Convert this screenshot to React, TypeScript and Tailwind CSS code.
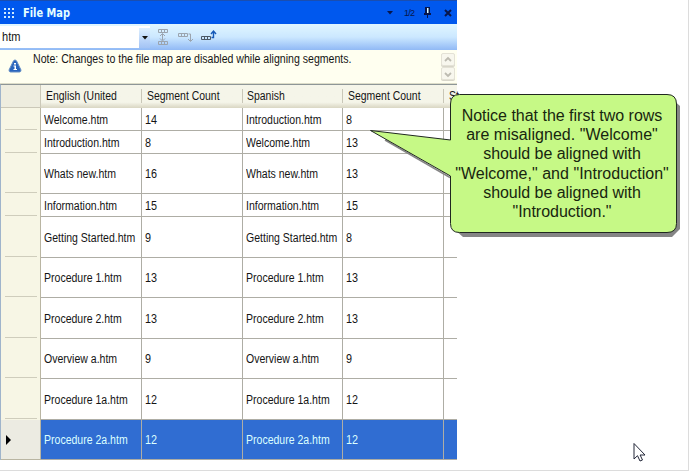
import React from "react";

type Row = { h: string; a: string; ac: string; b: string; bc: string; selected?: boolean };

const rows: Row[] = [
  { h: "h-[23px]", a: "Welcome.htm", ac: "14", b: "Introduction.htm", bc: "8" },
  { h: "h-[23px]", a: "Introduction.htm", ac: "8", b: "Welcome.htm", bc: "13" },
  { h: "h-[40px]", a: "Whats new.htm", ac: "16", b: "Whats new.htm", bc: "13" },
  { h: "h-[23px]", a: "Information.htm", ac: "15", b: "Information.htm", bc: "15" },
  { h: "h-[41px]", a: "Getting Started.htm", ac: "9", b: "Getting Started.htm", bc: "8" },
  { h: "h-[40px]", a: "Procedure 1.htm", ac: "13", b: "Procedure 1.htm", bc: "13" },
  { h: "h-[41px]", a: "Procedure 2.htm", ac: "13", b: "Procedure 2.htm", bc: "13" },
  { h: "h-[40px]", a: "Overview a.htm", ac: "9", b: "Overview a.htm", bc: "9" },
  { h: "h-[41px]", a: "Procedure 1a.htm", ac: "12", b: "Procedure 1a.htm", bc: "12" },
  { h: "h-[40px]", a: "Procedure 2a.htm", ac: "12", b: "Procedure 2a.htm", bc: "12", selected: true },
];

const tips = [
  { t: "Notice that the first two rows", c: "tracking-[-0.01px]" },
  { t: "are misaligned. \"Welcome\"", c: "tracking-[0.04px]" },
  { t: "should be aligned with", c: "tracking-[-0.03px]" },
  { t: "\"Welcome,\" and \"Introduction\"", c: "tracking-[0.03px]" },
  { t: "should be aligned with", c: "tracking-[-0.03px]" },
  { t: "\"Introduction.\"", c: "tracking-[-0.03px]" },
];

function Txt({ children, scale = "scale-x-[0.92]" }: { children: React.ReactNode; scale?: string }) {
  return <span className={"inline-block origin-left whitespace-nowrap " + scale}>{children}</span>;
}

function Cell({ children, selected, count }: { children?: React.ReactNode; selected?: boolean; count?: boolean }) {
  return (
    <div className={"flex items-center border-r border-b border-[#aeada5] pl-[3px] pt-px " + (selected ? "bg-[#306dd2] text-[#dcffff]" : "bg-white")}>
      <Txt scale={count ? "scale-x-[0.9]" : "scale-x-[0.877]"}>{children}</Txt>
    </div>
  );
}

function TitleBar() {
  return (
    <div className="flex h-6 items-center border-t border-[#1a4eb0] bg-[#0058ee]">
      <svg width="12" height="12" className="ml-[3px] mt-px" fill="#cdeaff" shapeRendering="crispEdges">
        {[1, 5, 9].map((y) => [1, 5, 9].map((x) => <rect key={`${x}-${y}`} x={x} y={y} width="2" height="2" />))}
      </svg>
      <span className="ml-2 origin-left scale-x-[0.82] whitespace-nowrap font-['DejaVu_Sans',sans-serif] text-[12px] font-bold text-[#e4ffff]">File Map</span>
      <svg width="72" height="16" className="ml-auto" fill="#07164c">
        <path d="M2 6h6l-3 3.5z" />
        <text x="19" y="10.500" fontSize="9" fontFamily="Liberation Sans, sans-serif" textLength="11">1/2</text>
        <path d="M40 2h5v6h1v2h-3v3h-1v-3h-3V8h1z" />
        <path d="M42 3h1.5v5H42z" fill="#dff" />
        <path d="M60 5l6 6M66 5l-6 6" stroke="#07164c" strokeWidth="2" />
      </svg>
    </div>
  );
}

function Segs({ x, y }: { x: number; y: number }) {
  return <path d={`M${x + 0.5} ${y + 0.5}h9v3h-9zM${x + 3.5} ${y}v4M${x + 6.5} ${y}v4`} fill="none" />;
}

function Toolbar() {
  return (
    <div className="flex h-[26px] items-center bg-linear-to-b from-[#e0f6ff] via-[#cce8ff] to-[#91b9f5]">
      <div className="flex h-[22px] w-[150px] items-center bg-white pl-0.5">
        <Txt>htm</Txt>
        <div className="ml-auto mt-0.5 flex h-5 w-[11px] items-center justify-center bg-linear-to-b from-[#dff0ff] to-[#a3c3f5]">
          <svg width="6" height="4"><path d="M0 0h6L3 3.500z" fill="#111" /></svg>
        </div>
      </div>
      <svg width="62" height="18" className="ml-[7px]" stroke="#9ba4ae" fill="none">
        <Segs x={1} y={1} />
        <Segs x={1} y={13} />
        <path d="M5.500 6v6M3 8l2.500-2.500L8 8M3 10.500L5.500 13 8 10.500" />
        <Segs x={21} y={5} />
        <path d="M31.500 6h2v7M31 11l2.500 2.500L36 11" />
        <g stroke="#4b5966"><Segs x={44} y={8} /></g>
        <path d="M54.500 9.500h2V4M54 6l2.500-3L59 6" stroke="#1559b7" strokeWidth="1.400" />
      </svg>
    </div>
  );
}

function Note() {
  return (
    <div className="flex h-[34px] border-b border-[#dcdcc8] bg-[#fffff0]">
      <svg width="14" height="14" className="ml-2 mt-[9px] shrink-0">
        <path d="M7 1Q8 1 8.600 2L13 11Q13 13 11.500 13H2.500Q1 13 1 11L5.400 2Q6 1 7 1z" fill="#2864bd" stroke="#668fc4" />
        <path d="M6 4h2v1.500H6zM5.500 6.500H8V10h1v1H5.500v-1h1V7.500h-1z" fill="#fff" />
      </svg>
      <div className="ml-[11px] w-[400px] pt-px leading-4"><Txt scale="scale-x-[0.881]">Note: Changes to the file map are disabled while aligning segments.</Txt></div>
      <div className="ml-auto flex w-4 shrink-0 flex-col gap-px pt-[3px]">
        {["M4 7l3-3 3 3", "M4 5l3 3 3-3"].map((d) => (
          <div key={d} className="h-[13px] w-[14px] rounded-[2px] border border-[#e4e2d6] bg-[#f8f7ee] shadow-[0_1px_0_#d8d6ca]">
            <svg width="12" height="11" viewBox="1 0 12 11"><path d={d} fill="none" stroke="#bdbbb1" strokeWidth="1.800" /></svg>
          </div>
        ))}
      </div>
    </div>
  );
}

function Head({ children, pad = "pl-[5px] pb-px", last = false }: { children: React.ReactNode; pad?: string; last?: boolean }) {
  return (
    <div className={"flex items-center bg-[#ecebdc] bg-linear-to-b from-[#f5f5e9] from-75% to-[#d9d6c3] " + pad}>
      <Txt scale="scale-x-[0.87]">{children}</Txt>
      {!last && <div className="ml-auto h-3.5 w-px shrink-0 bg-[#c9c7b8]" />}
    </div>
  );
}

const grid = "grid grid-cols-[41px_101px_101px_100px_101px_13px]";

export default function App() {
  return (
    <div className="relative h-[471px] w-[689px] overflow-hidden border-r border-b border-[#dcdcdc] bg-white font-['Liberation_Sans',Arial,sans-serif] text-[12px] leading-none text-[#151515]">
      <div className="w-[457px]">
        <TitleBar />
        <Toolbar />
        <Note />
        <div className="border-t border-l border-t-[#8e9697] border-l-[#9fb4cb]">
          <div className={grid + " -ml-px h-[23px]"}>
            <div className="ml-px border-r border-b border-[#cbc8b8] bg-[#eeeddf]" />
            <Head pad="pl-[5px] pb-[2px]">English (United</Head>
            <Head>Segment Count</Head>
            <Head pad="pl-1 pb-px">Spanish</Head>
            <Head>Segment Count</Head>
            <Head last>St</Head>
          </div>
          {rows.map((r) => (
            <div key={r.a} className={`${grid} -ml-px ${r.h}`}>
              <div className={"ml-px flex border-r border-[#b9b5a2] " + (r.selected ? "items-center border-b bg-[#ecebe2] pl-[5px]" : "items-end bg-[#f7f6e5] pl-1 pr-[3px]")}>
                {r.selected
                  ? <svg width="6" height="10"><path d="M0 0l5 5-5 5z" fill="#000" /></svg>
                  : <div className="mb-px h-px w-full bg-[#cfcdbc]" />}
              </div>
              <Cell selected={r.selected}>{r.a}</Cell>
              <Cell selected={r.selected} count>{r.ac}</Cell>
              <Cell selected={r.selected}>{r.b}</Cell>
              <Cell selected={r.selected} count>{r.bc}</Cell>
              <div className={"border-b border-[#aeada5] " + (r.selected ? "bg-[#306dd2]" : "")} />
            </div>
          ))}
        </div>
      </div>

      <div className="absolute left-[365px] top-[90px] h-[150px] w-[320px]">
        <svg width="320" height="150" className="absolute inset-0">
          <path d="M100 8H306l9 8V139l-8 8H98l-9-8V40z" fill="#858585" />
          <path d="M20 50L85 87.500" stroke="#858585" strokeWidth="1.500" />
          <path d="M94.500 4.500H302Q311.500 4.500 311.500 14V133.500Q311.500 142.500 302 142.500H94.500Q85.500 142.500 85.500 133.500V86L5.500 40.500 85.500 50V14Q85.500 4.500 94.500 4.500z" fill="#c6f986" stroke="#202820" />
        </svg>
        <div className="relative ml-[84px] flex w-[226px] flex-col items-center pt-4 text-[16px] leading-[19.2px] text-[#18260f]">
          {tips.map((l, i) => <span key={i} className={"whitespace-nowrap " + l.c}>{l.t}</span>)}
        </div>
      </div>

      <svg width="14" height="21" className="absolute left-[633px] top-[442px]">
        <path d="M1 1.500V17l3.500-3.300L7 19l2.500-1-2.400-5H12z" fill="#fff" stroke="#222638" />
      </svg>
    </div>
  );
}
